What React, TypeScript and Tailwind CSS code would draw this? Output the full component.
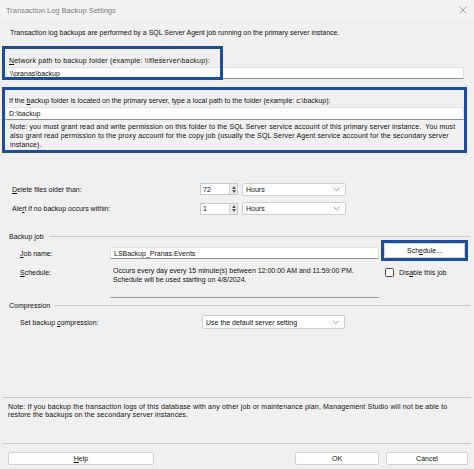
import type { ReactNode } from "react";

function U({ children }: { children: ReactNode }) {
  return <span className="underline underline-offset-[1px] decoration-[0.5px]">{children}</span>;
}

function TextBox({ children, className = "" }: { children?: ReactNode; className?: string }) {
  return (
    <div
      className={`bg-white border border-[#e3e3e3] border-b-[#8f8f8f] pl-[3px] flex items-center ${className}`}
    >
      {children}
    </div>
  );
}

function Chevron() {
  return (
    <svg width="7" height="5" viewBox="0 0 7 5" className="mr-[5px]">
      <path d="M0.8 1 L3.5 3.7 L6.2 1" fill="none" stroke="#7a7a7a" strokeWidth="0.8" />
    </svg>
  );
}

function Combo({ label, className = "" }: { label: string; className?: string }) {
  return (
    <div
      className={`bg-white border border-[#cfcfcf] rounded-[2px] pl-[3px] flex items-center justify-between ${className}`}
    >
      <span>{label}</span>
      <Chevron />
    </div>
  );
}

function Spinner({ value }: { value: string }) {
  return (
    <div className="w-[38px] h-[12px] bg-white border border-[#c9c9c9] flex items-center justify-between pl-[2px]">
      <span>{value}</span>
      <div className="w-[8px] h-full bg-[#ececec] border-l border-[#d6d6d6] flex flex-col items-center justify-center gap-[1px]">
        <svg width="4" height="3" viewBox="0 0 4 3">
          <path d="M0 3 L2 0 L4 3 Z" fill="#555" />
        </svg>
        <svg width="4" height="3" viewBox="0 0 4 3">
          <path d="M0 0 L4 0 L2 3 Z" fill="#555" />
        </svg>
      </div>
    </div>
  );
}

function GroupHeader({ title }: { title: string }) {
  return (
    <div className="h-[10px] flex items-center pl-[9px] pr-[4px]">
      <span>{title}</span>
      <div className="flex-1 h-px bg-[#cacaca] ml-[5px]" />
    </div>
  );
}

function Button({ children, className = "" }: { children: ReactNode; className?: string }) {
  return (
    <div
      className={`h-[13px] bg-[#fdfdfd] border border-[#d2d2d2] rounded-[2px] flex items-center justify-center ${className}`}
    >
      {children}
    </div>
  );
}

export default function App() {
  return (
    <div className="relative w-[474px] h-[469px] overflow-hidden bg-[#f0f0f0] text-[#111] text-[7px] leading-[9px] font-['Liberation_Sans',Arial,sans-serif]">
      {/* Title bar */}
      <div className="h-[20px] flex items-center justify-between pl-[6px] pr-[7px] bg-[#f3f3f3] text-[#7b7b7b] text-[7.5px]">
        <span>Transaction Log Backup Settings</span>
        <svg width="8" height="8" viewBox="0 0 8 8">
          <path d="M0.5 0.5 L7.5 7.5 M7.5 0.5 L0.5 7.5" stroke="#8a8a8a" strokeWidth="0.7" />
        </svg>
      </div>

      <div className="h-[24px] flex items-center pl-[10px]">
        Transaction log backups are performed by a SQL Server Agent job running on the primary server instance.
      </div>

      {/* Network path */}
      <div className="pt-[12px]">
        <div className="h-[9px] pl-[9px] tracking-[0.2px]">
          <U>N</U>etwork path to backup folder (example: \\fileserver\backup):
        </div>
        <TextBox className="mt-[2px] ml-[6px] w-[458px] h-[12px]">\\pranas\backup</TextBox>
      </div>

      {/* Local path, highlighted */}
      <div className="mt-[8px] ml-[2px] w-[465px] border-[3px] border-[#1d4e9e]">
        <div className="pt-[6px]">
          <div className="h-[9px] pl-[4px]">
            If the <U>b</U>ackup folder is located on the primary server, type a local path to the folder (example: c:\backup):
          </div>
          <TextBox className="mt-[2px] h-[13px]">D:\backup</TextBox>
          <div className="pt-[2px] pb-[1px] pl-[5px] whitespace-pre tracking-[0.13px]">
            Note: you must grant read and write permission on this folder to the SQL Server service account of this primary server instance.  You must
            <br />
            also grant read permission to the proxy account for the copy job (usually the SQL Server Agent service account for the secondary server
            <br />
            instance).
          </div>
        </div>
      </div>

      {/* Retention */}
      <div className="mt-[30px] h-[12px] flex items-center">
        <div className="w-[200px] pl-[12px]">
          <U>D</U>elete files older than:
        </div>
        <Spinner value="72" />
        <Combo label="Hours" className="ml-[4px] w-[104px] h-[13px]" />
      </div>
      <div className="mt-[7px] h-[13px] flex items-center">
        <div className="w-[200px] pl-[12px]">
          Ale<U>r</U>t if no backup occurs within:
        </div>
        <Spinner value="1" />
        <Combo label="Hours" className="ml-[4px] w-[104px] h-[13px]" />
      </div>

      {/* Backup job */}
      <div className="mt-[16px]">
        <GroupHeader title="Backup job" />
      </div>
      <div className="flex">
        <div className="w-[379px]">
          <div className="mt-[6px] h-[12px] flex items-center">
            <div className="w-[110px] pl-[20px]">
              <U>J</U>ob name:
            </div>
            <TextBox className="flex-1 h-[12px]">LSBackup_Pranas.Events</TextBox>
          </div>
          <div className="mt-[3px] h-[36px] flex">
            <div className="w-[110px] pl-[20px] pt-[6px]">
              <U>S</U>chedule:
            </div>
            <div className="flex-1 pl-[3px] pt-[4px] border-b border-[#9a9a9a]">
              Occurs every day every 15 minute(s) between 12:00:00 AM and 11:59:00 PM.
              <br />
              Schedule will be used starting on 4/8/2024.
            </div>
          </div>
        </div>
        <div className="ml-[2px] w-[87px]">
          <div className="-mt-[1px] h-[21px] border-[3px] border-[#1d4e9e]">
            <div className="h-full bg-white border border-[#d4d4d4] rounded-[2px] flex items-center justify-center">
              <span>
                Sch<U>e</U>dule...
              </span>
            </div>
          </div>
          <div className="mt-[7px] flex items-center pl-[4px] gap-[5px]">
            <div className="w-[9px] h-[9px] bg-white border border-[#444] rounded-[1.5px]" />
            <span>
              Dis<U>a</U>ble this job
            </span>
          </div>
        </div>
      </div>

      {/* Compression */}
      <div className="mt-[2px]">
        <GroupHeader title="Compression" />
      </div>
      <div className="mt-[5px] h-[14px] flex items-center">
        <div className="w-[202px] pl-[20px]">
          Set backup <U>c</U>ompression:
        </div>
        <Combo label="Use the default server setting" className="w-[143px] h-[14px]" />
      </div>

      {/* Footer note */}
      <div className="mt-[68px] mx-[3px] h-px bg-[#c8c8c8]" />
      <div className="mt-[5px] pl-[8px] leading-[8px] tracking-[0.15px]">
        Note: If you backup the transaction logs of this database with any other job or maintenance plan, Management Studio will not be able to
        <br />
        restore the backups on the secondary server instances.
      </div>
      <div className="mt-[24px] mx-[3px] h-px bg-[#c8c8c8]" />

      <div className="mt-[8px] flex">
        <Button className="ml-[8px] w-[146px]">
          <U>H</U>elp
        </Button>
        <Button className="ml-auto w-[84px] border-[#6d94c4]">OK</Button>
        <Button className="ml-[7px] mr-[6px] w-[82px]">Cancel</Button>
      </div>

      {/* Annotation outline over the network path */}
      <div className="absolute left-[2px] top-[46px] w-[221px] h-[34px] border-[3px] border-[#1d4e9e] pointer-events-none" />
    </div>
  );
}
